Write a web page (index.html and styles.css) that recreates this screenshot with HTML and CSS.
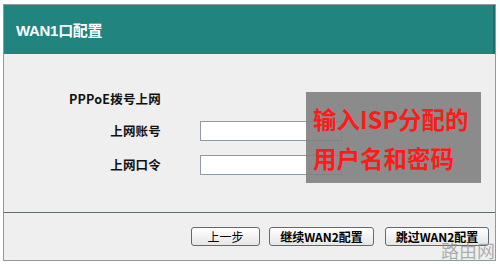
FILE: index.html
```
<!DOCTYPE html>
<html lang="zh-CN">
<head>
<meta charset="utf-8">
<title>WAN1口配置</title>
<link rel="stylesheet" href="styles.css">
</head>
<body>
<div class="frame">
  <div class="header">WAN1口配置</div>
  <div class="content">
    <div class="form">
      <div class="label">PPPoE拨号上网</div>
      <div></div>
      <div class="label">上网账号</div>
      <input class="field" type="text">
      <div class="label">上网口令</div>
      <input class="field" type="password">
    </div>
    <div class="note">
      <div>输入ISP分配的</div>
      <div>用户名和密码</div>
    </div>
  </div>
  <div class="footer">
    <button class="btn btn-prev">上一步</button>
    <button class="btn btn-next">继续WAN2配置</button>
    <button class="btn btn-skip">跳过WAN2配置</button>
  </div>
  <div class="watermark">路由网</div>
</div>
</body>
</html>
```
FILE: styles.css
```
* { box-sizing: border-box; }
html, body { margin: 0; padding: 0; background: #ffffff; }
body {
  font-family: "Noto Sans CJK SC", "Liberation Sans", sans-serif;
  width: 500px;
  height: 264px;
  overflow: hidden;
}
.frame {
  position: relative;
  margin: 4px 0 0 3px;
  width: 493px;
  height: 257px;
  border: 1px solid #8f9a99;
  background: #efefef;
  display: flex;
  flex-direction: column;
}
.header {
  height: 49px;
  background: #22847e;
  border-right: 2px solid #1b6f69;
  color: #ffffff;
  font-family: "Liberation Sans", "Noto Sans CJK SC", sans-serif;
  font-weight: bold;
  font-size: 15px;
  padding: 18px 0 0 12px;
  line-height: 16px;
  letter-spacing: -0.3px;
}
.content {
  position: relative;
  height: 159px;
  border-bottom: 1px solid #5f6b6a;
}
.form {
  display: grid;
  grid-template-columns: 157px 142px;
  column-gap: 39px;
  row-gap: 3px;
  padding-top: 32px;
  align-items: center;
}
.label {
  text-align: right;
  font-weight: bold;
  font-size: 12.5px;
  color: #111;
  height: 31px;
  line-height: 31px;
  letter-spacing: 0.2px;
}
.label:first-child { height: 26px; line-height: 26px; }
.field {
  width: 142px;
  height: 20px;
  border: 1px solid #8e9aa6;
  background: #ffffff;
  margin: 0;
  padding: 0;
}
.note {
  position: absolute;
  left: 302px;
  top: 38px;
  width: 175px;
  height: 91px;
  background: rgba(128, 128, 128, 0.9);
  color: #ff1a1a;
  font-size: 23.5px;
  font-weight: bold;
  padding: 8px 0 0 7px;
  line-height: 39px;
}
.footer {
  flex: 1;
  display: flex;
  justify-content: flex-end;
  align-items: flex-start;
  padding: 14px 6px 0 0;
  gap: 9px;
}
.btn {
  height: 19px;
  margin: 0;
  padding: 0;
  border: 1px solid #5d6b78;
  border-radius: 3px;
  background: linear-gradient(#ffffff, #e6e6e6);
  font-family: "Noto Sans CJK SC", sans-serif;
  font-size: 12px;
  line-height: 17px;
  color: #000;
}
.btn-prev { width: 69px; }
.btn-next { width: 105px; font-weight: bold; }
.btn-skip { width: 104px; margin-left: 2px; font-weight: bold; }
.watermark {
  position: absolute;
  right: 0;
  bottom: -1px;
  font-size: 18px;
  color: rgba(150, 150, 150, 0.75);
  line-height: 21px;
}
```
